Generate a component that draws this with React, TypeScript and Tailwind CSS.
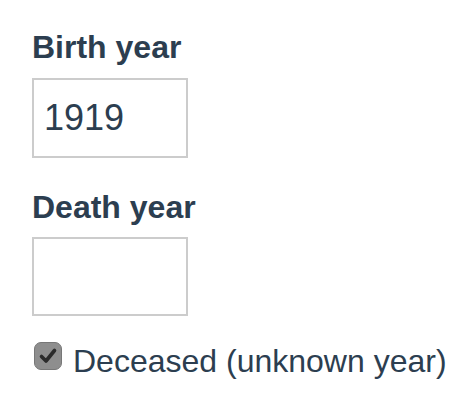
import { useState } from 'react';

const App = () => {
  const [birth, setBirth] = useState('1919');
  const [death, setDeath] = useState('');
  const [deceased, setDeceased] = useState(true);

  return (
    <div
      className="min-h-[400px] w-[476px] bg-white pl-8 pt-[31px] text-[#2c3e50]"
      style={{ fontFamily: '"Liberation Sans", Arial, sans-serif' }}
    >
      {/* Birth year */}
      <label className="block text-[32px] font-bold leading-none">Birth year</label>
      <input
        value={birth}
        onChange={(e) => setBirth(e.target.value)}
        className="mt-[15px] block h-[80px] w-[156px] border-2 border-[#cccccc] bg-white px-[10px] text-[36px] leading-none text-[#2c3e50] outline-none"
      />

      {/* Death year */}
      <label className="mt-[33px] block text-[32px] font-bold leading-none">Death year</label>
      <input
        value={death}
        onChange={(e) => setDeath(e.target.value)}
        className="mt-[14px] block h-[79px] w-[156px] border-2 border-[#cccccc] bg-white px-[10px] text-[36px] leading-none text-[#2c3e50] outline-none"
      />

      {/* Deceased checkbox */}
      <div
        className="mt-[26px] flex cursor-pointer items-start gap-[11px]"
        onClick={() => setDeceased(!deceased)}
      >
        <div className="ml-[2px] flex h-[28px] w-[28px] shrink-0 items-center justify-center rounded-[7px] border border-[#777777] bg-[#8e8e8e]">
          {deceased && (
            <svg width="22" height="22" viewBox="0 0 22 22">
              <path
                d="M4.5 11.5 L9 16 L17.5 5.5"
                fill="none"
                stroke="#2b2b2b"
                strokeWidth="3.6"
                strokeLinecap="round"
                strokeLinejoin="round"
              />
            </svg>
          )}
        </div>
        <span className="mt-[3px] text-[32px] leading-none">Deceased (unknown year)</span>
      </div>
    </div>
  );
};

export default App;
